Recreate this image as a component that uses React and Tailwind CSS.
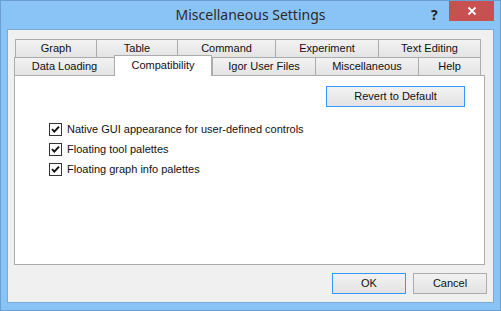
import React from 'react';

const row1 = [
    { label: 'Graph', w: 'w-[81px]' },
    { label: 'Table', w: 'w-[81px]' },
    { label: 'Command', w: 'w-[98px]' },
    { label: 'Experiment', w: 'w-[103px]' },
    { label: 'Text Editing', w: 'w-[103px]' },
];

const row2 = [
    { label: 'Data Loading', w: 'w-[100px]' },
    { label: 'Compatibility', w: 'w-[98px]', active: true },
    { label: 'Igor User Files', w: 'w-[103px]' },
    { label: 'Miscellaneous', w: 'w-[103px]' },
    { label: 'Help', w: 'w-[63px]' },
];

const options = [
    'Native GUI appearance for user-defined controls',
    'Floating tool palettes',
    'Floating graph info palettes',
];

const Tab = ({ label, w, active }) => {
    if (active) {
        return (
            <div className={`${w} h-[21px] -mt-[2px] -mb-[1px] relative z-10 bg-white border border-b-0 border-[#acacac] flex items-start justify-center pt-[1px] text-[11px] text-[#111]`}>
                {label}
            </div>
        );
    }
    return (
        <div className={`${w} h-[18px] bg-gradient-to-b from-[#f2f2f2] to-[#e4e4e4] border border-r-0 border-b-0 border-[#acacac] last:border-r flex items-center justify-center text-[11px] text-[#111]`}>
            {label}
        </div>
    );
};

const CheckBox = () => (
    <div className="w-[13px] h-[13px] border border-[#333] bg-white flex items-center justify-center">
        <svg width="9" height="9" viewBox="0 0 9 9">
            <path d="M1 4.2 L3.3 6.6 L8 1.6" fill="none" stroke="#111" strokeWidth="1.9" />
        </svg>
    </div>
);

const App = () => {
    return (
        <div className="w-[501px] h-[311px] bg-[#8ac4f6] border border-[#6b9fd2] flex flex-col" style={{ fontFamily: '"Liberation Sans", Arial, sans-serif' }}>
            {/* title bar */}
            <div className="h-[28px] relative flex items-center justify-center">
                <span className="text-[14px] text-[#2a2a2a] mt-[-2px]" style={{ fontFamily: '"Noto Sans", "Open Sans", sans-serif' }}>
                    Miscellaneous Settings
                </span>
                <span className="absolute left-[430px] top-[3px] text-[14px] font-bold text-[#222]" style={{ fontFamily: '"Noto Sans", sans-serif' }}>?</span>
                <div className="absolute left-[448px] top-0 w-[45px] h-[20px] bg-[#c75050] flex items-center justify-center">
                    <svg width="10" height="10" viewBox="0 0 10 10">
                        <path d="M1.5 1.5 L8.5 8.5 M8.5 1.5 L1.5 8.5" stroke="#fff" strokeWidth="1.8" />
                    </svg>
                </div>
            </div>

            {/* client area */}
            <div className="mx-[6px] h-[274px] border border-[#7aaad8] bg-[#f0f0f0] flex flex-col">
                <div className="ml-[6px] mt-[9px] w-[471px]">
                    <div className="flex ml-[1px]">
                        {row1.map((t) => (
                            <Tab key={t.label} {...t} />
                        ))}
                    </div>
                    <div className="flex items-start">
                        {row2.map((t) => (
                            <Tab key={t.label} {...t} />
                        ))}
                    </div>
                    <div className="h-[190px] bg-white border border-[#acacac] pt-[10px] pl-[34px] pr-[19px]">
                        <div className="flex justify-end">
                            <button className="w-[139px] h-[21px] border border-[#3399ff] bg-gradient-to-b from-[#f2f2f2] to-[#e3e3e3] text-[11px] text-[#111]">
                                Revert to Default
                            </button>
                        </div>
                        <div className="mt-[16px] flex flex-col gap-[7px]">
                            {options.map((o) => (
                                <div key={o} className="flex items-center gap-[5px] h-[13px]">
                                    <CheckBox />
                                    <span className="text-[11px] text-[#111]">{o}</span>
                                </div>
                            ))}
                        </div>
                    </div>
                </div>
                <div className="flex justify-end gap-[7px] mt-[8px] mr-[6px]">
                    <button className="w-[74px] h-[21px] border border-[#3399ff] bg-gradient-to-b from-[#f2f2f2] to-[#e3e3e3] text-[11px] text-[#111]">
                        OK
                    </button>
                    <button className="w-[74px] h-[21px] border border-[#acacac] bg-gradient-to-b from-[#f2f2f2] to-[#e3e3e3] text-[11px] text-[#111]">
                        Cancel
                    </button>
                </div>
            </div>
        </div>
    );
};

export default App;
